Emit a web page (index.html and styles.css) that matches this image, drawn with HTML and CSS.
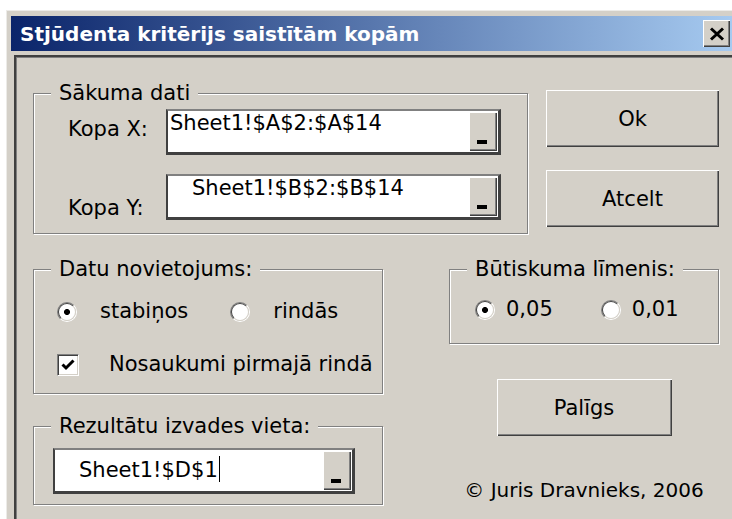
FILE: index.html
```html
<!DOCTYPE html>
<html lang="lv">
<head>
<meta charset="utf-8">
<title>Stjūdenta kritērijs saistītām kopām</title>
<link rel="stylesheet" href="styles.css">
</head>
<body>
<div class="window">
  <div class="titlebar">
    <span class="title">Stjūdenta kritērijs saistītām kopām</span>
    <button class="close" aria-label="Aizvērt">
      <svg width="16" height="14" viewBox="0 0 16 14"><path d="M2 1.5 L14 12.5 M14 1.5 L2 12.5" stroke="#000" stroke-width="3" fill="none"/></svg>
    </button>
  </div>
  <div class="client">
    <div class="row-top">
      <fieldset class="group group-source">
        <legend>Sākuma dati</legend>
        <div class="field-row row-x">
          <span class="field-label">Kopa X:</span>
          <div class="ref ref-wide"><span class="ref-value">Sheet1!$A$2:$A$14</span><span class="ref-btn"></span></div>
        </div>
        <div class="field-row row-y">
          <span class="field-label">Kopa Y:</span>
          <div class="ref ref-wide"><span class="ref-value indent">Sheet1!$B$2:$B$14</span><span class="ref-btn"></span></div>
        </div>
      </fieldset>
      <div class="actions">
        <button class="btn">Ok</button>
        <button class="btn">Atcelt</button>
      </div>
    </div>
    <div class="row-bottom">
      <div class="col-left">
        <fieldset class="group group-layout">
          <legend>Datu novietojums:</legend>
          <div class="opt-row">
            <label class="opt"><span class="radio on"></span><span class="opt-text">stabiņos</span></label>
            <label class="opt opt-second"><span class="radio"></span><span class="opt-text">rindās</span></label>
          </div>
          <div class="opt-row check-row">
            <label class="opt"><span class="check"><svg width="14" height="12" viewBox="0 0 14 12"><path d="M1.5 5.5 L5 9 L12.5 1.5" stroke="#000" stroke-width="3" fill="none"/></svg></span><span class="opt-text check-text">Nosaukumi pirmajā rindā</span></label>
          </div>
        </fieldset>
        <fieldset class="group group-output">
          <legend>Rezultātu izvades vieta:</legend>
          <div class="ref ref-out"><span class="ref-value indent">Sheet1!$D$1<span class="caret"></span></span><span class="ref-btn"></span></div>
        </fieldset>
      </div>
      <div class="col-right">
        <fieldset class="group group-alpha">
          <legend>Būtiskuma līmenis:</legend>
          <div class="opt-row">
            <label class="opt"><span class="radio on"></span><span class="opt-text tight">0,05</span></label>
            <label class="opt opt-second-alpha"><span class="radio"></span><span class="opt-text tight">0,01</span></label>
          </div>
        </fieldset>
        <button class="btn btn-help">Palīgs</button>
        <p class="copyright">© Juris Dravnieks, 2006</p>
      </div>
    </div>
  </div>
</div>
</body>
</html>
```

FILE: styles.css
```css
html, body {
  margin: 0;
  padding: 0;
  background: #fff;
  overflow: hidden;
  width: 732px;
  height: 519px;
}

.window {
  margin: 10px 0 0 6px;
  width: 730px;
  height: 509px;
  box-sizing: border-box;
  background: #d4d0c8;
  border-top: 1px solid #ecebe8;
  border-left: 1px solid #ecebe8;
  padding: 5px 4px 0 4px;
  font-family: "DejaVu Sans", sans-serif;
  font-size: 21px;
  color: #000;
}

/* caption bar */
.titlebar {
  height: 35px;
  display: flex;
  align-items: center;
  background: linear-gradient(to right, #0a246a, #a6caf0);
  padding-left: 9px;
}
.title {
  flex: 1;
  color: #fff;
  font-weight: bold;
  font-size: 20px;
  white-space: nowrap;
}
.close {
  width: 27px;
  height: 27px;
  margin-right: 2px;
  padding: 0;
  border: 0;
  background: #d4d0c8;
  box-shadow: inset 1px 1px #fff, inset -1px -1px #404040, inset -2px -2px #808080;
  display: flex;
  align-items: center;
  justify-content: center;
}

/* form client area */
.client {
  margin: 4px 0 0 3px;
  height: 464px;
  box-sizing: border-box;
  border-top: 2px solid #404040;
  border-left: 2px solid #404040;
  box-shadow: inset 1px 1px #808080;
  padding: 24px 0 0 17px;
}

.row-top {
  display: flex;
  align-items: flex-start;
}
.row-bottom {
  display: flex;
  align-items: flex-start;
  margin-top: 23px;
}

/* etched group frames */
.group {
  margin: 0;
  padding: 0;
  min-width: 0;
  box-sizing: border-box;
  border: 1px solid #808080;
  box-shadow: inset 1px 1px #fff, 1px 1px #fff;
}
.group legend {
  margin-left: 17px;
  padding: 0 8px;
  line-height: 25px;
  background: #d4d0c8;
}

.group-source {
  width: 495px;
  padding: 3px 0 12px 0;
}
.field-row {
  display: flex;
  align-items: flex-start;
  padding-left: 34px;
}
.row-y {
  margin-top: 19px;
}
.field-label {
  width: 98px;
  line-height: 25px;
}
.row-x .field-label { padding-top: 8px; }
.row-y .field-label { padding-top: 22px; }

/* range-reference edit with collapse button */
.ref {
  display: flex;
  height: 46px;
  box-sizing: border-box;
  background: #fff;
  border-style: solid;
  border-width: 2px 3px 3px 2px;
  border-color: #808080 #404040 #404040 #404040;
}
.ref-wide { width: 335px; }
.ref-value {
  flex: 1;
  line-height: 25px;
  padding-left: 2px;
  white-space: nowrap;
}
.ref-value.indent { padding-left: 24px; }
.ref-btn {
  width: 28px;
  margin: 1px 1px 1px 0;
  background: #d4d0c8;
  box-shadow: inset 1px 1px #fff, inset -1px -1px #404040, inset -2px -2px #808080;
  position: relative;
}
.ref-btn::after {
  content: "";
  position: absolute;
  left: 8px;
  bottom: 7px;
  width: 10px;
  height: 4px;
  background: #000;
}
.caret {
  display: inline-block;
  width: 1px;
  height: 26px;
  background: #000;
  vertical-align: -5px;
  margin-left: 1px;
}

/* command buttons */
.actions {
  display: flex;
  flex-direction: column;
  gap: 23px;
  margin: 9px 0 0 18px;
}
.btn {
  width: 173px;
  height: 57px;
  border: 0;
  padding: 0;
  background: #d4d0c8;
  box-shadow: inset 1px 1px #fff, inset -1px -1px #404040, inset -2px -2px #808080;
  font: inherit;
  color: #000;
}

.col-left {
  display: flex;
  flex-direction: column;
  gap: 20px;
  width: 350px;
}
.col-right {
  display: flex;
  flex-direction: column;
  align-items: center;
  width: 270px;
  margin-left: 66px;
}

/* option buttons and check box */
.group-layout {
  width: 350px;
  padding: 17px 0 16px 0;
}
.group-layout .opt-row { padding-left: 23px; }
.opt-row {
  display: flex;
  align-items: center;
  height: 25px;
}
.check-row { margin-top: 28px; }
.opt {
  display: flex;
  align-items: center;
  line-height: 25px;
}
.opt-second { margin-left: 42px; }
.opt-text { margin-left: 23px; }
.opt-text.tight { margin-left: 11px; }
.opt-text.check-text { margin-left: 30px; }

.radio {
  width: 20px;
  height: 20px;
  box-sizing: border-box;
  border-radius: 50%;
  border: 1px solid;
  border-color: #808080 #fff #fff #808080;
}
.radio::before {
  content: "";
  display: block;
  width: 100%;
  height: 100%;
  box-sizing: border-box;
  border-radius: 50%;
  border: 1px solid;
  border-color: #404040 #d4d0c8 #d4d0c8 #404040;
  background: #fff;
}
.radio.on::before {
  background: radial-gradient(circle, #000 0 2.6px, #fff 3.4px);
}

.check {
  width: 22px;
  height: 22px;
  box-sizing: border-box;
  border: 1px solid;
  border-color: #808080 #fff #fff #808080;
  background: #fff;
  box-shadow: inset 1px 1px #404040, inset -1px -1px #d4d0c8;
  display: flex;
  align-items: center;
  justify-content: center;
}

.group-output {
  width: 350px;
  padding: 9px 0 10px 0;
}
.ref-out {
  width: 302px;
  margin-left: 19px;
}
.ref-out .ref-value { line-height: 40px; }

.group-alpha {
  width: 270px;
  padding: 15px 0 21px 0;
}
.group-alpha .opt-row { padding-left: 25px; }
.opt-second-alpha { margin-left: 48px; }

.btn-help {
  width: 175px;
  margin-top: 35px;
}
.copyright {
  margin: 42px 0 0 0;
  line-height: 25px;
  font-size: 20px;
  white-space: nowrap;
}
```
